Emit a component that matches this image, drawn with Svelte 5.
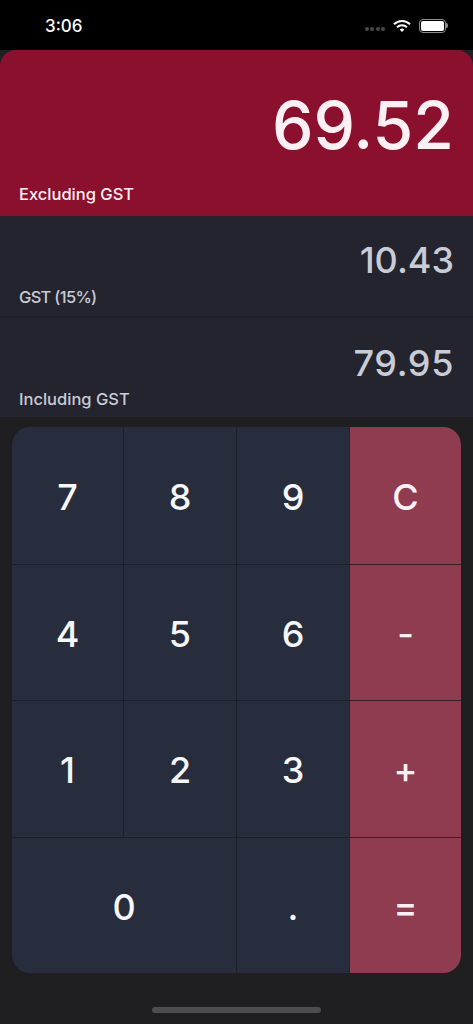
<script>
    const keys = [
        { label: "7" },
        { label: "8" },
        { label: "9" },
        { label: "C", op: true },
        { label: "4" },
        { label: "5" },
        { label: "6" },
        { label: "-", op: true },
        { label: "1" },
        { label: "2" },
        { label: "3" },
        { label: "+", op: true },
        { label: "0", wide: true },
        { label: "." },
        { label: "=", op: true },
    ];
</script>

<div class="screen">
    <header class="status">
        <span class="time">3:06</span>
        <div class="status-icons">
            <span class="signal"><i></i><i></i><i></i><i></i></span>
            <svg class="wifi" width="18" height="14" viewBox="0 0 18 14">
                <path d="M1 5.2a11.5 11.5 0 0 1 16 0" fill="none" stroke="#fff" stroke-width="2" />
                <path d="M4 8.2a7.2 7.2 0 0 1 10 0" fill="none" stroke="#fff" stroke-width="2" />
                <path d="M6.6 10.6 9 13l2.4-2.4a3.4 3.4 0 0 0-4.8 0z" fill="#fff" />
            </svg>
            <span class="battery"><b></b></span>
        </div>
    </header>

    <section class="amount main">
        <div class="value">69.52</div>
        <div class="label">Excluding GST</div>
    </section>
    <section class="amount tax">
        <div class="value">10.43</div>
        <div class="label">GST (15%)</div>
    </section>
    <section class="amount total">
        <div class="value">79.95</div>
        <div class="label">Including GST</div>
    </section>

    <div class="keypad">
        {#each keys as key}
            <button class="key" class:op={key.op} class:wide={key.wide}>{key.label}</button>
        {/each}
    </div>

    <div class="home"></div>
</div>

<style>
    :global(body) {
        margin: 0;
        background: #1f1f22;
    }
    .screen {
        width: 473px;
        height: 1024px;
        overflow: hidden;
        display: flex;
        flex-direction: column;
        background: #1f1f22;
        font-family: Inter, "Liberation Sans", sans-serif;
    }
    .status {
        height: 50px;
        flex: none;
        background: #000;
        color: #fff;
        display: flex;
        justify-content: space-between;
        align-items: center;
        padding: 2px 27px 0 45px;
        box-sizing: border-box;
    }
    .time {
        font-size: 17px;
        font-weight: 500;
    }
    .status-icons {
        display: flex;
        align-items: center;
    }
    .signal {
        display: flex;
        gap: 1.5px;
        margin: 6px 8px 0 0;
    }
    .signal i {
        width: 4px;
        height: 4px;
        border-radius: 50%;
        background: #4a4a4a;
    }
    .wifi {
        margin-right: 8px;
    }
    .battery {
        position: relative;
        width: 27px;
        height: 14px;
        border: 1px solid #8e8e8e;
        border-radius: 4px;
        box-sizing: border-box;
        padding: 1px;
        display: flex;
    }
    .battery b {
        flex: 1;
        background: #fff;
        border-radius: 2px;
    }
    .battery::after {
        content: "";
        position: absolute;
        right: -3px;
        top: 3px;
        width: 2px;
        height: 5px;
        background: #8e8e8e;
        border-radius: 0 2px 2px 0;
    }
    .amount {
        flex: none;
        box-sizing: border-box;
        background: #23242e;
        padding: 0 19px;
        color: #c9cbd6;
        display: flex;
        flex-direction: column;
        justify-content: space-between;
    }
    .amount.main {
        height: 166px;
        background: #8b102e;
        border-radius: 16px 16px 0 0;
        color: #fdf0f4;
    }
    .amount.tax {
        height: 102px;
        border-bottom: 2px solid #1f1f26;
    }
    .amount.total {
        height: 99px;
    }
    .value {
        text-align: right;
        font-size: 36px;
        font-weight: 500;
        line-height: 44px;
        margin-top: 22px;
    }
    .total .value {
        margin-top: 23px;
        letter-spacing: 0.6px;
    }
    .main .value {
        font-size: 66px;
        line-height: 80px;
        margin-top: 35px;
    }
    .label {
        font-size: 16.5px;
        font-weight: 450;
        line-height: 20px;
        margin-bottom: 8px;
    }
    .tax .label {
        margin-bottom: 9px;
        letter-spacing: -0.7px;
    }
    .main .label {
        margin-bottom: 12px;
    }
    .keypad {
        margin: 10px 12px 0;
        height: 546px;
        flex: none;
        display: grid;
        grid-template-columns: 112px 113px 113px 111px;
        grid-template-rows: repeat(4, 1fr);
        border-radius: 18px;
        overflow: hidden;
    }
    .key {
        border: none;
        border-right: 1px solid #1c2029;
        border-top: 1px solid #1c2029;
        background: #272d3c;
        color: #f6f7fb;
        font: inherit;
        font-size: 36px;
        font-weight: 450;
        padding: 3px 0 0;
    }
    .key:has(+ .op) {
        border-right-color: #232733;
    }
    .key.wide {
        grid-column: span 2;
    }
    .key.op {
        background: #8f3b50;
        color: #fdf0f4;
        border-right: none;
        border-top-color: #32222c;
    }
    .key:nth-child(-n + 4) {
        border-top: none;
        padding-top: 4px;
    }
    .home {
        width: 169px;
        height: 6px;
        margin: 34px auto 0;
        border-radius: 3px;
        background: #4d4d4d;
    }
</style>
